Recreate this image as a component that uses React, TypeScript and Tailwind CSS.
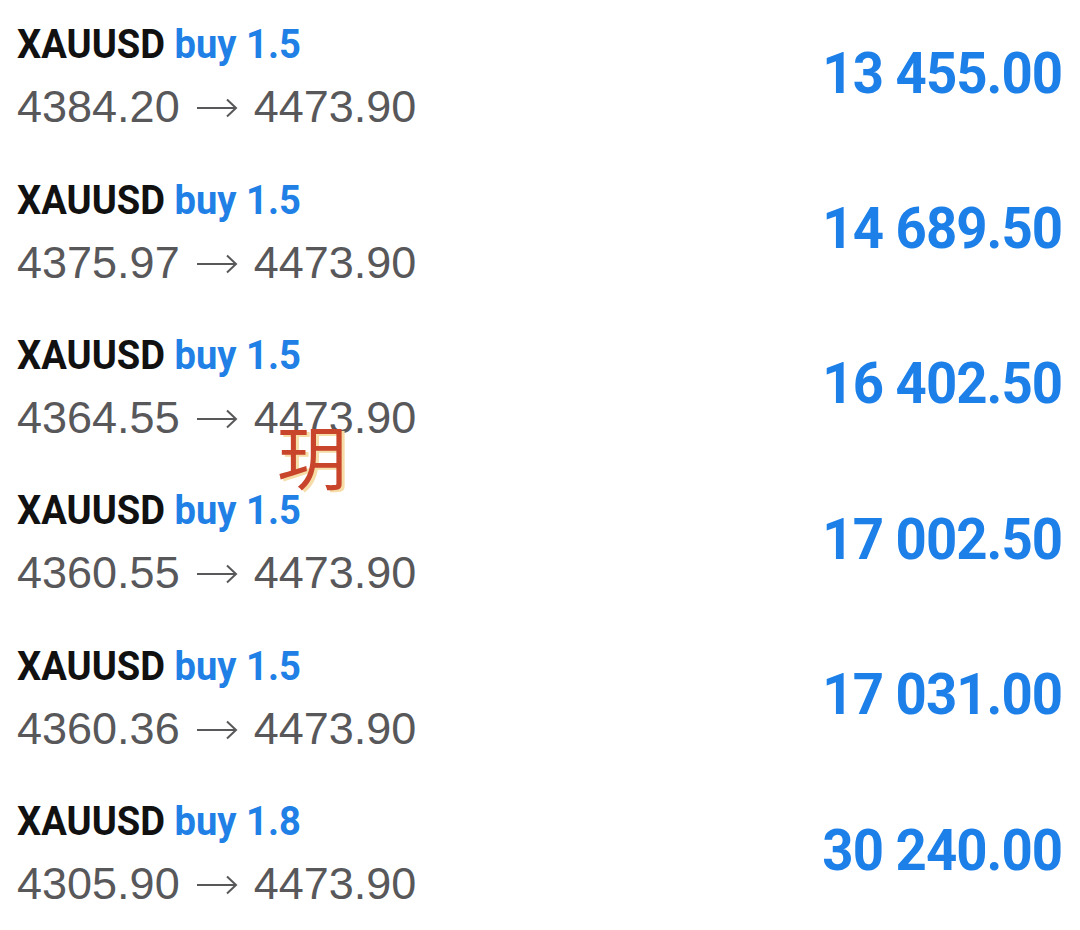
const trades = [
  { lot: "1.5", open: "4384.20", close: "4473.90", profit: "13 455.00" },
  { lot: "1.5", open: "4375.97", close: "4473.90", profit: "14 689.50" },
  { lot: "1.5", open: "4364.55", close: "4473.90", profit: "16 402.50" },
  { lot: "1.5", open: "4360.55", close: "4473.90", profit: "17 002.50" },
  { lot: "1.5", open: "4360.36", close: "4473.90", profit: "17 031.00" },
  { lot: "1.8", open: "4305.90", close: "4473.90", profit: "30 240.00" },
]

function Arrow() {
  return (
    <svg width="42" height="20" viewBox="0 0 42 20" className="inline-block mx-[16px] translate-y-[1px]">
      <path d="M1 10 H40 M31 1.5 L40 10 L31 18.5" fill="none" stroke="#58585b" strokeWidth="2" />
    </svg>
  )
}

export default function App() {
  return (
    <main className="relative w-[1080px] h-[930px] overflow-hidden bg-white">
      <div className="-mt-[2px]">
        {trades.map((t, i) => (
          <div key={i} className="h-[155.4px] flex items-center justify-between pl-[17px] pr-[18px]">
            <div>
              <div className="leading-[48px] text-[41px] font-bold font-['Roboto',sans-serif] whitespace-nowrap">
                <span className="inline-block origin-left scale-x-[0.93]">
                  <span className="text-[#111]">XAUUSD</span>{" "}
                  <span className="text-[#2080e6]">buy {t.lot}</span>
                </span>
              </div>
              <div className="mt-[15px] leading-[48px] text-[45px] text-[#58585b] font-['Liberation_Sans',Arial,sans-serif] whitespace-nowrap flex items-center">
                <span>{t.open}</span>
                <Arrow />
                <span>{t.close}</span>
              </div>
            </div>
            <div className="mb-[6px] text-[58px] leading-none font-bold text-[#1d7fe8] font-['Roboto',sans-serif] tracking-[-1px] whitespace-nowrap">
              <span className="inline-block origin-right scale-x-[0.94]">{t.profit}</span>
            </div>
          </div>
        ))}
      </div>

      {/* watermark */}
      <div className="absolute left-[277px] top-[420px] text-[70px] leading-none text-[#c8452b] font-['Noto_Sans_CJK_SC',sans-serif] [text-shadow:3px_2px_0_#f6dca6]">
        玥
      </div>
    </main>
  )
}
